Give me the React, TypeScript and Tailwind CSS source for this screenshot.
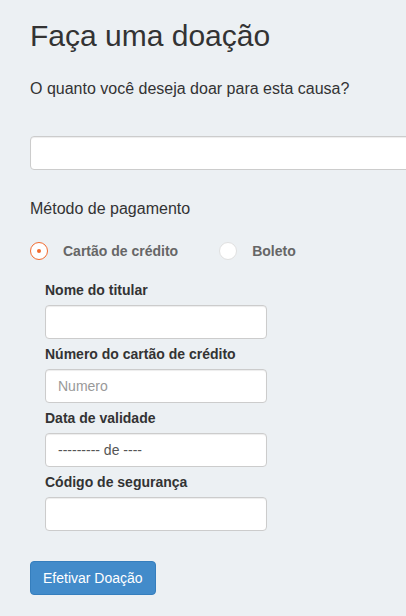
import React from "react";

const font = { fontFamily: '"Liberation Sans", Arial, sans-serif' };

function Field({ label, placeholder, value, last }: { label: string; placeholder?: string; value?: string; last?: boolean }) {
  return (
    <div className={last ? "" : "mb-[5px]"}>
      <label className="block text-[14px] leading-[20px] font-bold text-[#333] mb-[5px]">{label}</label>
      <input
        placeholder={placeholder}
        defaultValue={value}
        className="block w-[222px] h-[34px] bg-white border border-[#ccc] rounded-[4px] px-[12px] text-[14px] text-[#555] placeholder:text-[#999] shadow-[inset_0_1px_1px_rgba(0,0,0,0.075)] outline-none"
      />
    </div>
  );
}

export default function App() {
  return (
    <div style={font} className="w-[406px] h-[616px] overflow-hidden bg-[#ecf0f3] pl-[30px] flow-root">
      <h1 className="mt-[19px] text-[30px] leading-[33px] font-normal text-[#333]">Faça uma doação</h1>
      <p className="mt-[26px] text-[16px] leading-[22px] text-[#333]">O quanto você deseja doar para esta causa?</p>
      <input className="block mt-[36px] w-[420px] h-[34px] bg-white border border-[#ccc] rounded-[4px] px-[12px] shadow-[inset_0_1px_1px_rgba(0,0,0,0.075)] outline-none" />
      <div className="mt-[28px] text-[16px] leading-[22px] text-[#333]">Método de pagamento</div>
      <div className="mt-[22px] flex items-center h-[18px]">
        <span className="w-[18px] h-[18px] rounded-full border border-[#f26a2e] bg-white flex items-center justify-center">
          <span className="w-[4px] h-[4px] rounded-full bg-[#f26a2e]" />
        </span>
        <span className="ml-[15px] text-[14px] leading-[18px] font-bold text-[#666]">Cartão de crédito</span>
        <span className="ml-[41px] w-[18px] h-[18px] rounded-full border border-[#e0e0e0] bg-white" />
        <span className="ml-[15px] text-[14px] leading-[18px] font-bold text-[#666]">Boleto</span>
      </div>
      <div className="mt-[20px] pl-[15px]">
        <Field label="Nome do titular" />
        <Field label="Número do cartão de crédito" placeholder="Numero" />
        <Field label="Data de validade" value="--------- de ----" />
        <Field label="Código de segurança" last />
      </div>
      <button className="mt-[30px] h-[34px] px-[12px] bg-[#428bca] border border-[#357ebd] rounded-[4px] text-white text-[14px] leading-[20px]">
        Efetivar Doação
      </button>
    </div>
  );
}
